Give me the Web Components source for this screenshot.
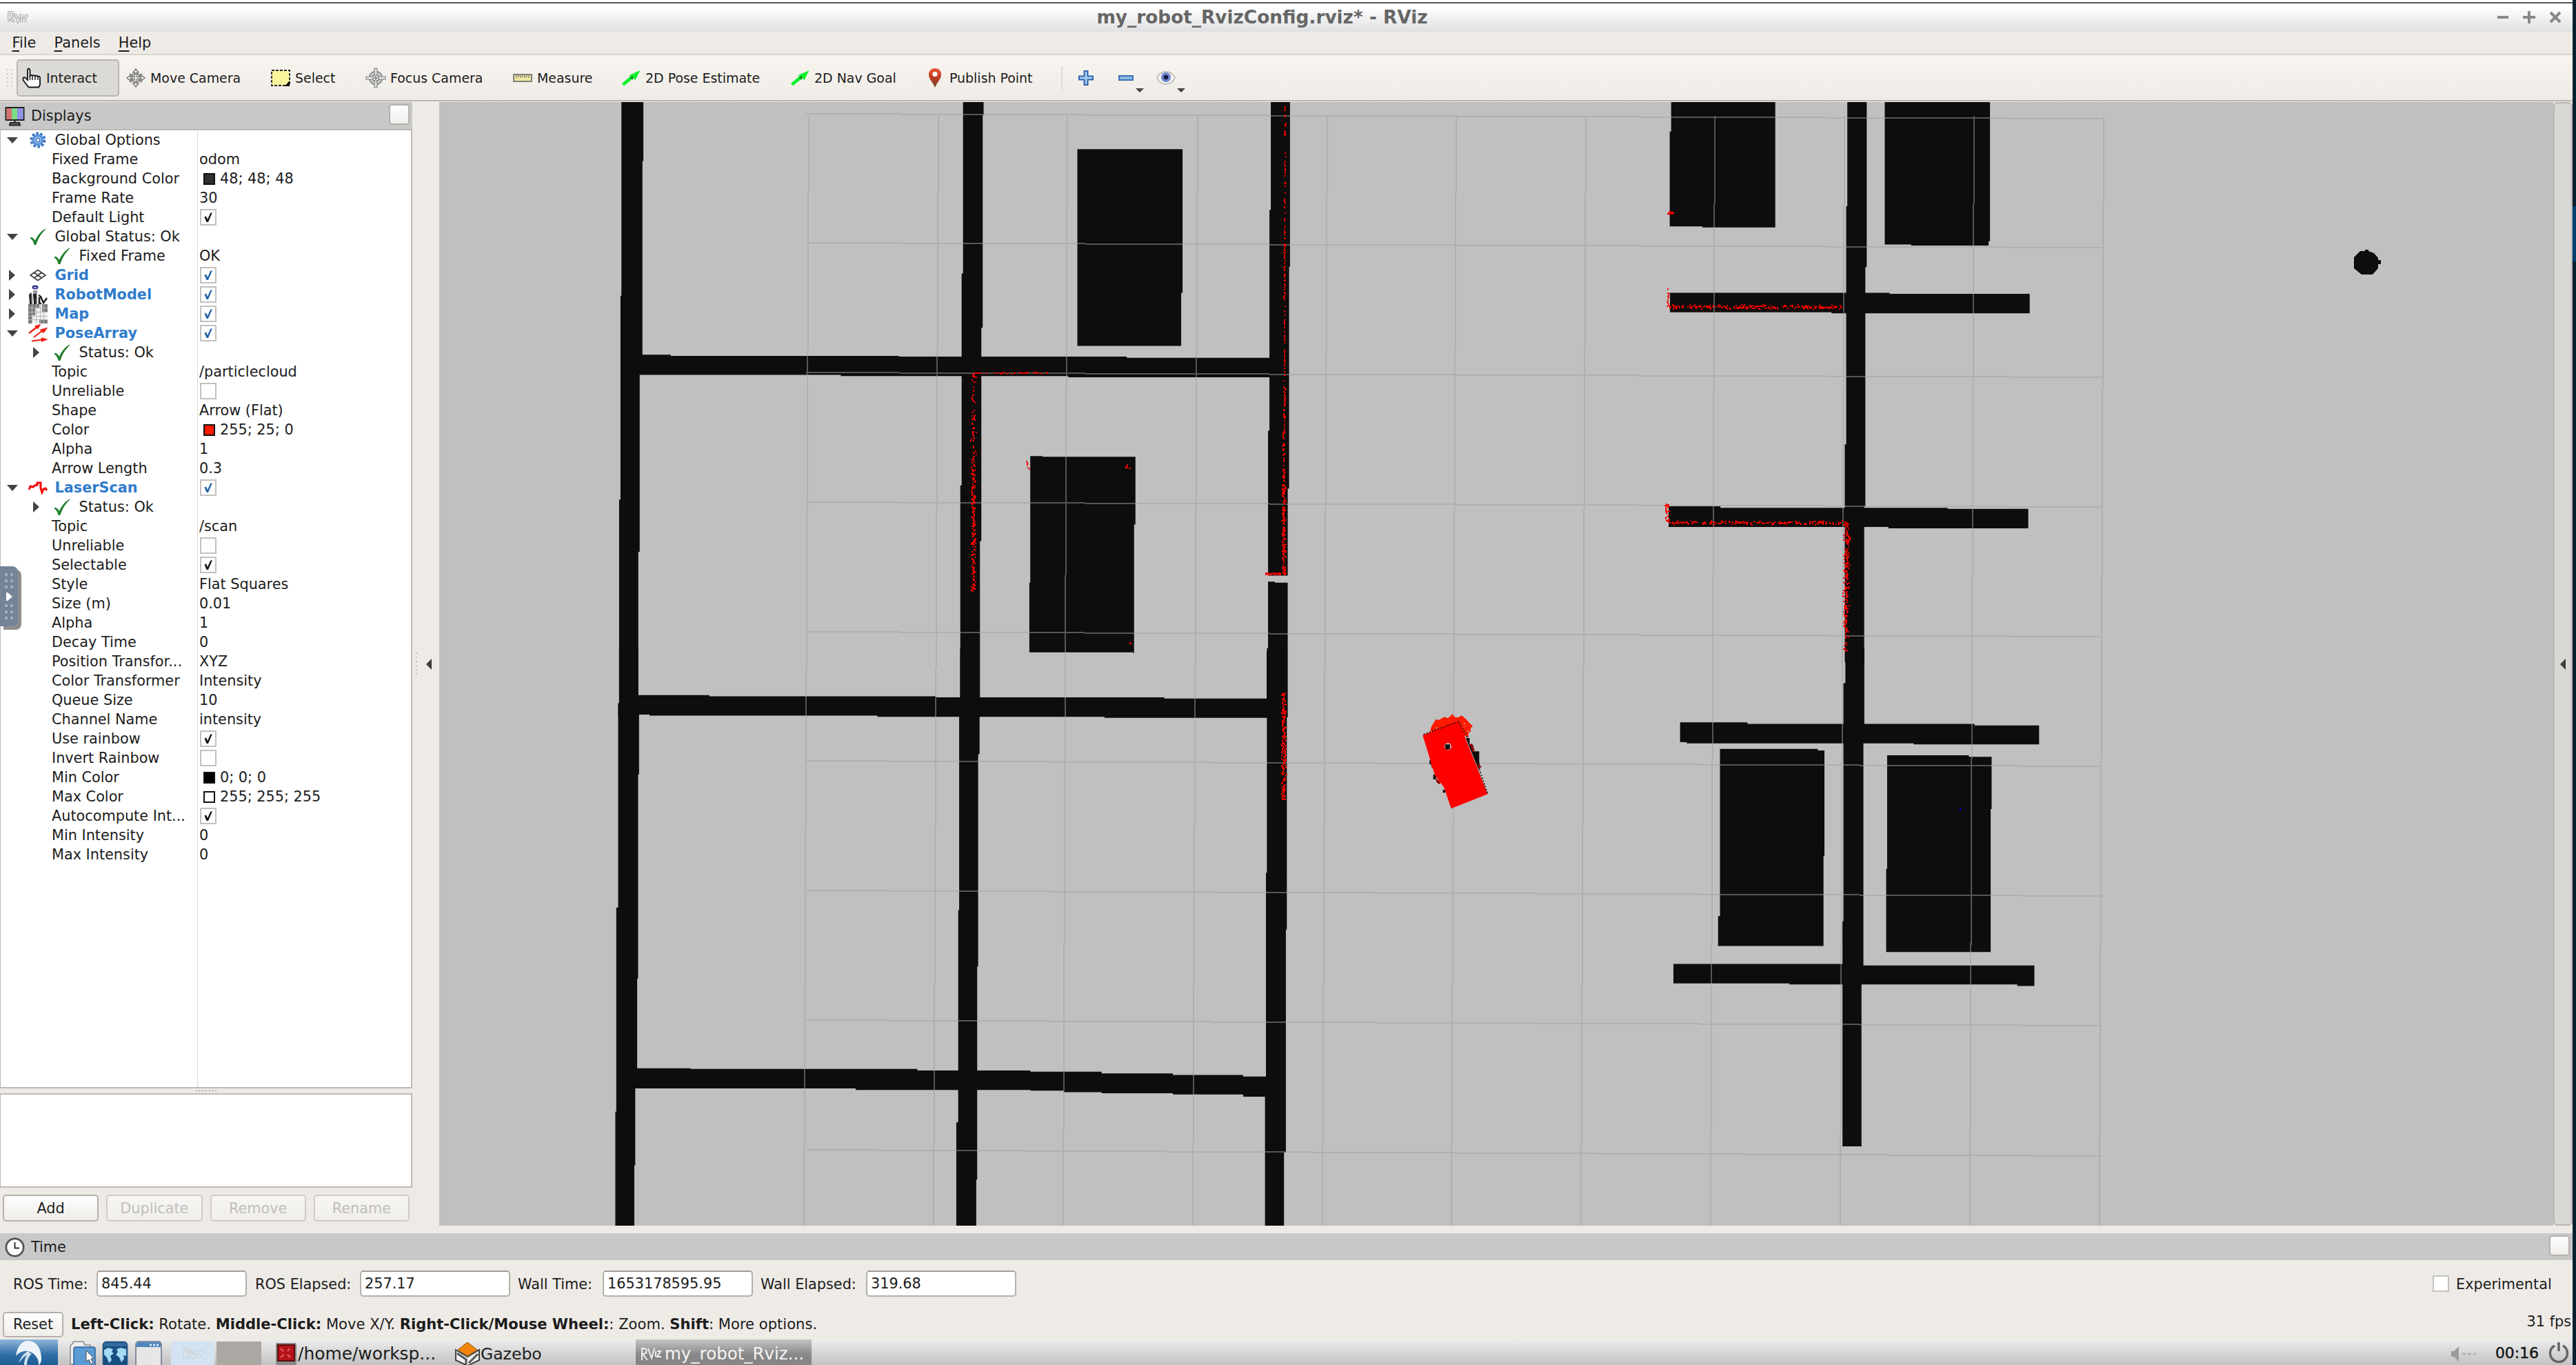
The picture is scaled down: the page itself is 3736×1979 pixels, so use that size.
<!DOCTYPE html>
<html lang="en">
<head>
<meta charset="utf-8">
<title>my_robot_RvizConfig.rviz* - RViz</title>
<style>
html,body{margin:0;padding:0;height:1979px;width:3736px;overflow:hidden;background:#07202f}
body{font-family:"DejaVu Sans",sans-serif;font-size:20.8px;color:#1c1c1c}
</style>
</head>
<body>
<rviz-window></rviz-window>
<script>
function define(name, css, html) {
  customElements.define(name, class extends HTMLElement {
    constructor() {
      super();
      this.attachShadow({ mode: 'open' });
    }
    connectedCallback() {
      if (this._done) return;
      this._done = true;
      this.shadowRoot.innerHTML = '<style>*{box-sizing:border-box}svg{display:block;flex:none}' + css + '</style>' +
        (typeof html === 'function' ? html(this) : html);
    }
  });
}

/* ---------- icons ---------- */
const CHECK = '<svg width="24" height="24" viewBox="0 0 24 24"><path d="M1 14C3.500 12.500 6 15 8 19C12 10 16 5 23 1C16 8 12 14 9 23.500H7C6 19 4 16 1 14Z" fill="#1f8a2c" stroke="#14691f" stroke-width="1"/></svg>';
const ICONS = {
  hand: '<svg width="28" height="30" viewBox="0 0 28 30"><path d="M8 18V4Q8 1.500 9.500 1.500T11.500 4V12Q13 10 15 12Q17 10.500 19 12.500Q21 11 23 13Q26 12 26 15V25L24 28.500H9.500L6 24L1.500 18V15Q4 13 6 16L8 18Z" fill="#fff" stroke="#1a1a1a" stroke-width="1.900"/><path d="M11.500 12V18M15 13V18M19 13V18M23 14V18" stroke="#1a1a1a" stroke-width="1.500"/></svg>',
  move: '<svg width="28" height="28" viewBox="0 0 28 28"><g fill="#f6f4f0" stroke="#777" stroke-width="1.400"><path d="M14 1L18 6H15.500V12.500H22V10L27 14L22 18V15.500H15.500V22H18L14 27L10 22H12.500V15.500H6V18L1 14L6 10V12.500H12.500V6H10Z"/><path d="M5 8L10 11M23 8L18 11M5 20L10 17M23 20L18 17" stroke-width="2"/><circle cx="14" cy="14" r="6.500" fill="none"/></g></svg>',
  select: '<svg width="28" height="26" viewBox="0 0 28 26"><rect x="1" y="2" width="26" height="22" fill="#faf49c" stroke="#222" stroke-width="1.800" stroke-dasharray="4 2"/><path d="M27 17V25H20Z" fill="#000"/></svg>',
  focus: '<svg width="30" height="30" viewBox="0 0 30 30"><g fill="none" stroke="#808080" stroke-width="1.700"><circle cx="15" cy="15" r="9.500" fill="#d6d6d6"/><circle cx="15" cy="15" r="5" fill="#eee"/><path d="M13 1H17V11H13ZM13 19H17V29H13ZM1 13H11V17H1ZM19 13H29V17H19Z" fill="#e4e4e4" stroke-width="1.200"/><path d="M15 12V18M12 15H18"/></g></svg>',
  measure: '<svg width="28" height="14" viewBox="0 0 28 14"><rect x="1" y="2" width="26" height="10" fill="#efe6a0" stroke="#666" stroke-width="1.600"/><path d="M5 3V7M8 3V6M11 3V7M14 3V6M17 3V7M20 3V6M23 3V7" stroke="#777" stroke-width="1.200"/></svg>',
  arrow: '<svg width="28" height="24" viewBox="0 0 28 24"><path d="M1 20L14 9L10.500 8.500L27.500 1L20.500 15L17.500 12.500L4 23.500Z" fill="#0cf22c"/><path d="M12 11L17 9L17 15Z" fill="#0a8d20"/></svg>',
  pin: '<svg width="28" height="30" viewBox="0 0 28 30"><defs><linearGradient id="p" x1="0" y1="0" x2="0" y2="1"><stop offset="0" stop-color="#ef5634"/><stop offset=".5" stop-color="#bd3a22"/><stop offset="1" stop-color="#69432c"/></linearGradient></defs><path d="M14 1C8 1 5 5 5 10C5 17 11 21 14 29C17 21 23 17 23 10C23 5 20 1 14 1Z" fill="url(#p)"/><circle cx="14" cy="9.500" r="3.600" fill="#fff"/></svg>',
  plus: '<svg width="24" height="24" viewBox="0 0 24 24"><path d="M9.500 2H14.500V9.500H22V14.500H14.500V22H9.500V14.500H2V9.500H9.500Z" fill="#a9cdf0" stroke="#2f66ab" stroke-width="2"/></svg>',
  minus: '<svg width="24" height="24" viewBox="0 0 24 24"><rect x="2" y="9" width="20" height="6" fill="#8fb8e6" stroke="#3c70b2" stroke-width="2"/></svg>',
  eye: '<svg width="28" height="22" viewBox="0 0 28 22"><path d="M1 11C6 -1 22 -1 27 11C22 23 6 23 1 11Z" fill="#f2f2ef" stroke="#b5b3b0" stroke-width="1.500"/><circle cx="14" cy="10" r="7" fill="#6c85cc"/><circle cx="14" cy="10" r="3.300" fill="#10183c"/></svg>',
  gear: '<svg width="24" height="24" viewBox="0 0 24 24"><circle cx="12" cy="12" r="9.700" fill="none" stroke="#3a74bd" stroke-width="3.600" stroke-dasharray="3.700 2.395"/><circle cx="12" cy="12" r="6.700" fill="#9cc3f0" stroke="#5b93d8" stroke-width="3.400"/><circle cx="12" cy="12" r="2.600" fill="#fff" stroke="#3a74bd" stroke-width="1.400"/></svg>',
  check: CHECK,
  grid: '<svg width="28" height="28" viewBox="0 0 28 28"><path d="M14 6.500L25 14L14 21.500L3 14ZM8.500 10L19.500 18M19.500 10L8.500 18" fill="none" stroke="#444" stroke-width="1.800" stroke-linejoin="round"/></svg>',
  robot: '<svg width="28" height="28" viewBox="0 0 28 28"><ellipse cx="10" cy="3.500" rx="4.500" ry="3" fill="#2a2a8c"/><ellipse cx="10" cy="4" rx="2.500" ry="1" fill="#c9c9e2"/><path d="M7 8H13V14H7Z" fill="#9a9a9a"/><path d="M1 14L4 11L6 16V28H2ZM7 13H12L13 28H8Z" fill="#222"/><path d="M15 15L18 17L22 26L27 19M16 18V27H19" fill="none" stroke="#222" stroke-width="2.600"/><path d="M5 12V27M12 20V28" stroke="#999" stroke-width="1.300"/></svg>',
  map: '<svg width="28" height="28" viewBox="0 0 28 28" shape-rendering="crispEdges"><rect width="28" height="28" fill="#f0f0f0"/><path d="M0 0H16V6H10V16H6V28H0ZM20 0H28V11H20ZM16 22H28V28H16Z" fill="#7c7c7c"/><path d="M5.500 0V28M11.500 0V28M17.500 0V28M22.500 0V28M0 5.500H28M0 11.500H28M0 17.500H28M0 22.500H28" stroke="#b6b6b6" stroke-width="1"/></svg>',
  poses: '<svg width="28" height="26" viewBox="0 0 28 26"><g stroke="#ef1c10" stroke-width="2.200" fill="#ef1c10"><path d="M1 13L13 4M8 19L21 9M5 24.500L20 22.500"/><path d="M18 0L14 7L9 3ZM28 5L22 13L17 8ZM28 22L19 25.500V19.500Z" stroke-width=".5"/></g></svg>',
  laser: '<svg width="28" height="20" viewBox="0 0 28 20"><path d="M1 13L3 8L7 9L9 7L13 6V3L18 3L18 11L20 17L22 12L25 11L27 14" fill="none" stroke="#f50a0a" stroke-width="3"/></svg>'
};

/* ---------- small controls ---------- */
define('push-button',
  ':host{display:flex;align-items:center;justify-content:center;border:2px solid #b4b1ac;border-radius:5px;background:linear-gradient(#fefefe,#efedea);color:#1c1c1c}:host([disabled]){border-color:#cfccc7;color:#c0beba;background:linear-gradient(#f7f6f4,#f0eeea)}',
  '<slot></slot>');
define('check-box',
  ':host{display:flex;width:24px;height:24px;border:2px solid #c3c1be;background:#fff;color:#151515;align-items:center;justify-content:center}:host([blue]){color:#2466a8}svg{visibility:hidden}:host([on]) svg{visibility:visible}',
  '<svg width="20" height="20" viewBox="0 0 20 20"><path d="M4.500 9.500L7 8.500L9 13L13 4L16 3L10 17H7.500Z" fill="currentColor"/></svg>');
define('text-field',
  ':host{display:flex;align-items:center;width:218px;height:38px;padding:0 0 1px 5px;border:2px solid #b4b1ac;border-top-color:#9f9d99;border-radius:5px;background:#fff}',
  '<slot></slot>');

/* ---------- title, menu, toolbar ---------- */
define('title-bar',
  ':host{display:flex;height:46px;border-top:3px solid #fff;align-items:center;background:linear-gradient(#fff 5%,#fcfcfc 25%,#dfe0e2)}' +
  'header{flex:1;height:43px;border-top:2px solid #555;display:flex;align-items:center;padding:0 16px 2px 11px}' +
  'h1{margin:0;flex:1;text-align:center;font-size:26.350px;line-height:30px;color:#666;white-space:nowrap}.r{width:95px;display:flex;gap:18px}.l{width:30px}',
  '<header><div class="l"><svg width="30" height="18" viewBox="0 0 30 18"><path d="M2 16V2H6Q10 3 8 8L3 9L10 16M11 4L15 15L19 4M20 7V15M22 7H28L22 14H28" fill="none" stroke="#9b9b9b" stroke-width="3.400"/><path d="M2 16V2H6Q10 3 8 8L3 9L10 16M11 4L15 15L19 4M20 7V15M22 7H28L22 14H28" fill="none" stroke="#fff" stroke-width="1.300"/></svg></div><h1>my_robot_RvizConfig.rviz* - RViz</h1>' +
  '<div class="r"><svg width="20" height="20"><path d="M2 10H18" stroke="#888" stroke-width="4"/></svg><svg width="20" height="20"><path d="M1 10H19M10 1V19" stroke="#888" stroke-width="4"/></svg><svg width="20" height="20"><path d="M3 3L17 17M17 3L3 17" stroke="#888" stroke-width="4"/></svg></div></header>');
define('menu-bar',
  ':host{display:flex;height:34px;background:#eeebe7;border-bottom:2px solid #d9d6d2;align-items:center;padding-left:17.500px;gap:26.300px}u{text-underline-offset:4px;text-decoration-thickness:2px}',
  '<span><u>F</u>ile</span><span><u>P</u>anels</span><span><u>H</u>elp</span>');
define('tool-button',
  ':host{display:flex;width:var(--w);height:54px;align-items:center;padding-left:8px;gap:7px;font-size:18.950px;flex:none;white-space:nowrap}:host([active]){border:2px solid #b9b6b1;border-radius:5px;background:#dcdad6;padding-left:6px}.i{width:28px;display:flex;justify-content:center}',
  el => '<span class="i">' + ICONS[el.getAttribute('icon')] + '</span><slot></slot>');
define('tool-bar',
  ':host{display:flex;height:68px;background:linear-gradient(#f8f5f1,#efebe6 94%);align-items:center;padding:0 0 3px 8px;position:relative}' +
  ':host::after{content:"";position:absolute;left:0;right:0;bottom:1px;height:2px;background:#bab6b2}' +
  '.h{width:12px;height:30px;margin-right:4px;background:radial-gradient(circle,#cfccc7 1px,transparent 1.500px) 0 0/6px 6px}.s{width:2px;height:34px;background:#dcd8d3;margin:0 22px 0 11px}' +
  '.d{width:12px;height:6px;align-self:end;margin:0 0 11px 2px;background:#444;clip-path:polygon(0 0,100% 0,50% 100%)}',
  '<i class="h"></i><tool-button active icon="hand" style="--w:149px;margin-right:2px">Interact</tool-button><tool-button icon="move" style="--w:210px">Move Camera</tool-button><tool-button icon="select" style="--w:138px">Select</tool-button><tool-button icon="focus" style="--w:213px">Focus Camera</tool-button><tool-button icon="measure" style="--w:157px">Measure</tool-button><tool-button icon="arrow" style="--w:245px">2D Pose Estimate</tool-button><tool-button icon="arrow" style="--w:196px">2D Nav Goal</tool-button><tool-button icon="pin" style="--w:194px">Publish Point</tool-button><i class="s"></i>' +
  ICONS.plus + '<span style="width:34px"></span>' + ICONS.minus + '<i class="d"></i><span style="width:18px"></span>' + ICONS.eye + '<i class="d"></i>');

/* ---------- displays tree ---------- */
define('prop-row',
  ':host{display:flex;height:28px;align-items:center;line-height:28px;white-space:nowrap}' +
  '.n{width:284px;display:flex;align-items:center;height:28px;overflow:hidden;flex:none}.n.b{font-weight:bold;color:#2f7ccc}.t{flex:none;width:19px;display:flex;justify-content:center}.ic{width:28px;display:flex;justify-content:center;flex:none}' +
  '.v{padding-left:5px;display:flex;align-items:center}.tx{margin-left:-1px}.sw{width:17px;height:17px;border:2px solid #111;margin:0 8px 0 5px}',
  el => {
    const g = n => el.getAttribute(n), has = n => el.hasAttribute(n);
    const tri = g('open') === '1' ? '<svg width="16" height="9"><path d="M0 0H16L8 9Z" fill="#444"/></svg>'
      : g('open') === '0' ? '<svg width="9" height="16"><path d="M0 0V16L9 8Z" fill="#444"/></svg>' : '';
    const lvl = +g('lvl');
    let n = '';
    if (lvl === 0) n = '<span class="t" style="margin-left:7px">' + tri + '</span><span class="ic" style="margin:0 10.500px 0 14px">' + ICONS[g('icon')] + '</span>';
    if (lvl === 1) n = '<span style="width:74px;flex:none"></span>';
    if (lvl === 2) n = '<span class="t" style="margin-left:42px">' + tri + '</span><span class="ic" style="margin:0 10.500px 0 14px">' + CHECK + '</span>';
    let v = '';
    if (has('chk')) v = '<check-box ' + (g('chk') !== '0' ? 'on ' : '') + (g('chk') === 'b' ? 'blue' : '') + '></check-box>';
    if (has('sw')) v += '<span class="sw" style="background:' + g('sw') + '"></span>';
    if (has('val')) v += '<span class="tx">' + g('val') + '</span>';
    return '<div class="n ' + (has('bold') ? 'b' : '') + '">' + n + '<span>' + g('name') + '</span></div><div class="v">' + v + '</div>';
  });
const ROWS = [
  [0, 'Global Options', { icon: 'gear', open: 1 }], [1, 'Fixed Frame', { val: 'odom' }], [1, 'Background Color', { sw: '#303030', val: '48; 48; 48' }],
  [1, 'Frame Rate', { val: '30' }], [1, 'Default Light', { chk: 1 }], [0, 'Global Status: Ok', { icon: 'check', open: 1 }], [2, 'Fixed Frame', { val: 'OK' }],
  [0, 'Grid', { icon: 'grid', open: 0, bold: 1, chk: 'b' }], [0, 'RobotModel', { icon: 'robot', open: 0, bold: 1, chk: 'b' }], [0, 'Map', { icon: 'map', open: 0, bold: 1, chk: 'b' }],
  [0, 'PoseArray', { icon: 'poses', open: 1, bold: 1, chk: 'b' }], [2, 'Status: Ok', { open: 0 }], [1, 'Topic', { val: '/particlecloud' }], [1, 'Unreliable', { chk: 0 }],
  [1, 'Shape', { val: 'Arrow (Flat)' }], [1, 'Color', { sw: '#ff1900', val: '255; 25; 0' }], [1, 'Alpha', { val: '1' }], [1, 'Arrow Length', { val: '0.3' }],
  [0, 'LaserScan', { icon: 'laser', open: 1, bold: 1, chk: 'b' }], [2, 'Status: Ok', { open: 0 }], [1, 'Topic', { val: '/scan' }], [1, 'Unreliable', { chk: 0 }], [1, 'Selectable', { chk: 1 }],
  [1, 'Style', { val: 'Flat Squares' }], [1, 'Size (m)', { val: '0.01' }], [1, 'Alpha', { val: '1' }], [1, 'Decay Time', { val: '0' }], [1, 'Position Transfor...', { val: 'XYZ' }],
  [1, 'Color Transformer', { val: 'Intensity' }], [1, 'Queue Size', { val: '10' }], [1, 'Channel Name', { val: 'intensity' }], [1, 'Use rainbow', { chk: 1 }], [1, 'Invert Rainbow', { chk: 0 }],
  [1, 'Min Color', { sw: '#000', val: '0; 0; 0' }], [1, 'Max Color', { sw: '#fff', val: '255; 255; 255' }], [1, 'Autocompute Int...', { chk: 1 }], [1, 'Min Intensity', { val: '0' }], [1, 'Max Intensity', { val: '0' }]
];
define('dock-title',
  ':host{display:flex;align-items:center;height:39px;background:#c8c8c8;padding:0 4px 0 7px;gap:9px}push-button{width:30px;height:30px;margin-left:auto;margin-bottom:3px}svg{margin-top:2px}',
  el => (el.getAttribute('icon') === 'screen'
    ? '<svg width="29" height="29" viewBox="0 0 29 29"><rect x="1.500" y="2" width="26" height="18" fill="#7ddb86" stroke="#222" stroke-width="2"/><path d="M2.500 3H10V19H2.500Z" fill="#d77070"/><path d="M18 3H26.500V19H18Z" fill="#9493ea"/><path d="M14.500 20V25M8 24H21L22 27.500H7Z" stroke="#222" stroke-width="2" fill="#777"/></svg>'
    : '<svg width="29" height="29" viewBox="0 0 29 29"><circle cx="14.500" cy="14.500" r="12.600" fill="#fff" stroke="#555" stroke-width="2.800"/><path d="M14.500 7V15.500H21" fill="none" stroke="#333" stroke-width="2"/></svg>') +
    '<slot></slot><push-button></push-button>');
define('displays-panel',
  ':host{display:flex;flex-direction:column;width:598px;height:1629px;flex:none}' +
  '.tree{height:1391px;border:2px solid #bdb9b5;border-left-width:1px;background:linear-gradient(#dcdad7,#dcdad7) 285px 0/1px 100% no-repeat #fff}' +
  '.dots{height:7px;background:radial-gradient(circle,#b5b2ad 1px,transparent 1.500px) 50% 50%/5px 5px repeat-x;width:30px;align-self:center}' +
  '.desc{height:137px;border:2px solid #bdb9b5;border-left-width:1px;background:#fff}.btns{display:flex;gap:11px;padding:10px 4px 0}.btns push-button{width:139.500px;height:39px}',
  el => '<dock-title icon="screen">Displays</dock-title><div class="tree">' +
    ROWS.map(([l, n, a]) => '<prop-row lvl="' + l + '" name="' + n + '"' + Object.entries(a).map(([k, v]) => ' ' + k + '="' + v + '"').join('') + '></prop-row>').join('') +
    '</div><div class="dots"></div><div class="desc"></div><div class="btns"><push-button>Add</push-button><push-button disabled>Duplicate</push-button><push-button disabled>Remove</push-button><push-button disabled>Rename</push-button></div>');
define('dock-splitter',
  ':host{display:flex;width:39px;align-items:center;gap:13px;padding:0 0 0 5px}.d{width:2px;height:34px;background:repeating-linear-gradient(#c4c1bc 0 2px,transparent 2px 6px)}',
  '<i class="d"></i><svg width="8" height="16"><path d="M8 0V16L0 8Z" fill="#3c3c3c"/></svg>');

/* ---------- 3D view ---------- */
function rng(seed) { return () => (seed = (seed * 16807) % 2147483647) / 2147483647; }
function scanPath() {
  const r = rng(4217);
  let d = '';
  const dot = (x, y) => { d += 'M' + Math.round(x) + ' ' + Math.round(y) + 'h2v2h-2z'; };
  const v = (x0, x1, y0, y1, n, j) => { for (let i = 0; i < n; i++) { const t = r(); dot(x0 + (x1 - x0) * t + (r() + r() - 1) * j, y0 + (y1 - y0) * t); } };
  const h = (x0, x1, y, n, j) => { for (let i = 0; i < n; i++) dot(x0 + (x1 - x0) * r(), y + (r() + r() - 1) * j); };
  v(1863, 1862, 150, 400, 60, 1.2); v(1862, 1862, 350, 620, 100, 1.2); v(1861, 1861, 600, 720, 60, 2); v(1861, 1861, 700, 830, 150, 3.2);
  v(1861, 1861, 1004, 1158, 210, 4); v(1411, 1411, 541, 690, 80, 4.5); v(1411, 1411, 690, 857, 180, 4);
  h(1411, 1522, 540, 42, 1.5); h(1834, 1864, 831, 60, 1.5);
  v(1488, 1491, 668, 679, 7, 1); h(1631, 1638, 676, 8, 4); h(1636, 1640, 931, 3, 1.5); h(2418, 2427, 308, 10, 3);
  v(2419, 2418, 418, 445, 18, 1.5); h(2418, 2672, 444, 220, 3.5); v(2417, 2417, 728, 756, 34, 4); h(2420, 2678, 757, 190, 3);
  v(2678, 2676, 757, 900, 170, 5); v(2676, 2676, 900, 947, 30, 5);
  return d;
}
function gridPath() {
  let d = '';
  [[1173, 1166], [1361, 1354], [1548, 1542], [1737, 1730], [1925, 1918], [2112, 2105], [2300, 2293], [2487, 2481], [2675, 2669], [2863, 2857], [3051, 3045]]
    .forEach(([a, b]) => { d += 'M' + a + ' 168L' + b + ' 1777'; });
  [[165, 172], [352, 359], [540, 547], [728, 735], [916, 923], [1103, 1111], [1291, 1299], [1479, 1487], [1667, 1676]]
    .forEach(([a, b]) => { d += 'M1169 ' + a + 'L3049 ' + b; });
  return d;
}
const poly = list => list.map(p => '<polygon points="' + p + '"/>').join('');
define('map-view',
  ':host{display:block;width:3066px;height:1629px;background:#c0c0c0;overflow:hidden}',
  el => '<svg width="3066" height="1629" viewBox="637 148 3066 1629"><g fill="#0d0d0d">' +
  '<g transform="translate(880 140) scale(.66327 .57398)">' + poly([
    '32,14 80,14 80,163 78,163 78,660 72,700 72,1150 69,1150 69,1568 25,1568 25,1532 27,1532 27,1018 30,1018 30,503 32,503',
    '779,14 824,14 824,47 822,47 822,584 819,584 819,1123 816,1123 816,1568 773,1568 773,982 776,982 776,447 779,447',
    '1452,14 1494,14 1494,430 1492,430 1492,990 1489,990 1489,1210 1446,1210 1446,844 1449,844 1449,286 1452,286',
    '1446,1225 1461,1225 1461,1228 1489,1228 1489,1568 1443,1568 1443,1402 1446,1402',
    '60,652 140,652 140,655 639,655 639,657 1137,657 1137,660 1470,660 1470,709 1009,709 1009,706 512,706 512,703 60,703',
    '1029,133 1259,133 1259,496 1256,496 1256,630 1029,630',
    '926,908 953,908 953,910 1156,910 1156,1081 1153,1081 1153,1407 1150,1404 924,1404 924,1228 926,1228']) + '</g>' +
  '<g transform="translate(2380 140) scale(.40816 .52296)">' + poly([
    '733,14 802,14 802,473 797,473 797,1137 793,1137 793,1568 724,1568 724,964 729,964 729,304 733,304',
    '107,14 477,14 477,363 218,363 218,360 102,360 102,97 107,97',
    '866,14 1240,14 1240,401 1235,401 1235,413 960,413 960,410 866,410',
    '103,544 883,544 883,547 1381,547 1381,601 677,601 677,598 103,598',
    '98,1136 282,1136 282,1140 1089,1140 1089,1143 1376,1143 1376,1197 879,1197 879,1193 98,1193']) + '</g>' +
  '<g transform="translate(880 940) scale(1.37755 .54209)">' + poly([
    '13,0 33,0 33,125 34,177 34,337 33,337 33,883 32,883 32,1130 30,1176 30,1383 29,1383 29,1550 9,1550 9,1239 10,1239 10,693 12,693 12,148 13,148',
    '372,0 392.500,0 392.500,283 391,283 391,851 390,851 390,1421 389,1421 389,1550 368,1550 368,1268 370,1268 370,700 371,700 371,183 372,183',
    '695,0 716,0 716,752 715,752 715,1348 713,1348 713,1550 693,1550 693,1150 694,1150 694,600 695,600',
    '25,125 108,125 108,128 347,128 347,131 587,131 587,134 705,134 705,186 524,186 524,183 285,183 285,180 45,180 45,177 25,177',
    '25,1123 88,1123 88,1125 327,1125 327,1129 446,1129 446,1132 521,1132 521,1137 596,1137 596,1141 670,1141 670,1145 705,1145 705,1199 670,1199 670,1193 596,1193 596,1190 521,1190 521,1187 481,1187 481,1183 446,1183 446,1181 262,1181 262,1177 25,1177',
    '1304,0 1324,0 1324,200 1323,255 1323,850 1321,900 1321,1332 1301,1332 1301,730 1302,730 1302,93 1304,93',
    '1130,198 1201,198 1201,202 1440,202 1440,206 1508,206 1508,257 1376,257 1376,254 1137,254 1137,251 1130,251',
    '1172,269 1275,269 1275,273 1282,273 1282,555 1281,555 1281,796 1170,796 1170,716 1172,716',
    '1348,286 1434,286 1434,290 1458,290 1458,430 1457,430 1457,812 1347,812 1347,590 1348,590',
    '1123,844 1301,844 1301,848 1503,848 1503,903 1485,903 1485,899 1245,899 1245,896 1123,896']) + '</g>' +
  '<path d="M3423 364H3430V362H3435V364L3443 367L3449 374V377H3453V383H3449V389L3441 398H3425L3414 389V373Z"/></g>' +
  '<path d="' + gridPath() + '" fill="none" stroke="#a0a0a0" stroke-opacity=".5" stroke-width="2" shape-rendering="crispEdges"/>' +
  '<path d="' + scanPath() + '" fill="#f50000" shape-rendering="crispEdges"/><rect x="2842" y="1171" width="2" height="4" fill="#0000c8"/>' +
  '<g transform="translate(1980 980) scale(.33333)"><path d="M283 240L288 220L308 188L320 192L345 178L360 184L378 166L392 180L405 180L420 172L440 190L455 206L468 218L458 228L460 240L448 250L450 268L440 262Z" fill="#ff1a00"/>' +
  '<g fill="#c0c0c0"><circle cx="310" cy="226" r="3"/><circle cx="374" cy="175" r="2"/><circle cx="431" cy="207" r="3"/><circle cx="431" cy="220" r="2"/><circle cx="448" cy="240" r="3"/></g>' +
  '<path d="M438 270H454V300H470V328H496V372L500 400L492 405ZM296 430H308V450H296ZM280 366H292V384H280ZM338 495H348V508H338Z" fill="#0d0d0d"/>' +
  '<path d="M454 298L464 294L476 322L470 334ZM484 378L506 394L496 406ZM282 370H292L300 402L290 400ZM306 444L328 462L322 472L310 462Z" fill="#8e0000"/>' +
  '<polygon points="250,258 406,196 533,514 374,577 342,484 318,452 302,430 285,372" fill="#f00"/>' +
  '<path d="M254 254L406 198L444 268M496 405L533 514" fill="none" stroke="#0d0d0d" stroke-width="5" stroke-dasharray="6 7"/>' +
  '<circle cx="360" cy="307" r="15" fill="#c0c0c0"/><path d="M348 298H369V317L356 321L348 316Z" fill="#0d0d0d"/></g></svg>');
define('side-grip',
  ':host{display:flex;width:28px;align-items:center;justify-content:center;background:#dad8d4;border:2px solid #bab6b2;border-radius:6px}',
  '<svg width="8" height="16"><path d="M8 0V16L0 8Z" fill="#3c3c3c"/></svg>');

/* ---------- time panel and status ---------- */
define('time-panel',
  ':host{display:flex;flex-direction:column;height:165px;padding-top:11px}.f{display:flex;align-items:center;height:38px;margin-top:15px;padding-left:19px;white-space:nowrap}.f>span{flex:none;padding-top:1px}' +
  'text-field{margin-right:12px;flex:none}check-box{margin:0 10px 0 auto}.s{display:flex;align-items:center;margin-top:21px;padding:0 2px 0 4px;height:38px;gap:11px;white-space:nowrap}.s push-button{width:88px;height:37px}.s p{margin:0;flex:1;padding-bottom:1px;font-size:21.080px}',
  '<dock-title icon="clock">Time</dock-title><div class="f"><span style="width:121px">ROS Time:</span><text-field>845.44</text-field><span style="width:152px">ROS Elapsed:</span><text-field style="margin-right:11px">257.17</text-field><span style="width:123px">Wall Time:</span><text-field style="margin-right:11px">1653178595.95</text-field><span style="width:153px">Wall Elapsed:</span><text-field>319.68</text-field><check-box></check-box><span style="width:169px">Experimental</span></div>' +
  '<div class="s"><push-button>Reset</push-button><p><b>Left-Click:</b> Rotate. <b>Middle-Click:</b> Move X/Y. <b>Right-Click/Mouse Wheel:</b>: Zoom. <b>Shift</b>: More options.</p><span style="padding-bottom:8px">31 fps</span></div>');

/* ---------- desktop task bar ---------- */
define('task-item',
  ':host{display:flex;align-items:center;height:37px;width:var(--w);gap:4px;flex:none;font-size:24.500px;white-space:nowrap;padding-top:4px}:host([active]){background:linear-gradient(#c4c4c4,#888 60%,#858585);color:#f4f4f4;padding-left:7px}',
  '<slot name="icon"></slot><slot></slot>');
define('task-bar',
  ':host{display:flex;height:37px;background:linear-gradient(#ececec,#c2c2c2);align-items:center}.m{width:84px;height:37px;background:linear-gradient(#8fb6da,#2f6ca4 60%,#1d5c95);display:flex;justify-content:center}' +
  '.p{width:63px;height:34px;background:#d3e3f1;margin:3px 3px 0 12px;display:flex;align-items:center;justify-content:center}.q{width:65px;height:34px;background:#aba8a4;margin:3px 21px 0 0}b{font-weight:normal;font-size:21.900px;color:#111;margin:2px 14px 0 27px;-webkit-text-stroke:.4px #111}',
  '<div class="m"><svg width="40" height="37" viewBox="0 0 40 37"><path d="M1 24C3 9 10 2 19 2C31 2 38 13 38 28C38 33 36 36 34 37C35 28 28 19 19 17C12 16 6 18 1 24Z" fill="#eef4f9"/><path d="M19 17C11 21 7 28 5 35C9 28 14 23 22 20Z" fill="#dbe8f3"/><path d="M20 19C15 24 13 31 13 37L17 37C17 31 19 25 24 21Z" fill="#cfe0ee"/></svg></div>' +
  '<svg width="38" height="35" style="margin:2px 0 0 17px"><path d="M1 8L6 1H20L22 6H30V34H1Z" fill="#eee" stroke="#8a8a8a" stroke-width="1.500"/><rect x="6" y="9" width="31" height="28" rx="3" fill="#5a9bd4" stroke="#2c6095" stroke-width="1.500"/><path d="M24 14V30L28 27L31 34L34 32L31 26L35 25Z" fill="#fff" stroke="#444"/></svg>' +
  '<svg width="38" height="35" style="margin:2px 0 0 9px"><rect x="1" y="1" width="36" height="37" rx="5" fill="#174e80" stroke="#446b8c"/><rect x="3" y="3" width="32" height="5" fill="#356c9e"/><path d="M3 13L9 10L16 12L14 16L17 18L12 22L14 28L10 32L7 24L3 20ZM21 12L27 10L35 12V22L31 21L32 26L28 31L25 24L20 20L23 16Z" fill="#a5daf4"/></svg>' +
  '<svg width="40" height="35" style="margin:2px 0 0 10px"><rect x="1" y="1" width="37" height="36" rx="4" fill="#e6e6e6" stroke="#65748a" stroke-width="1.500"/><path d="M2 9V5Q2 2 5 2H34Q37 2 37 5V9Z" fill="#4b85bd"/><path d="M21 6H24M26 6H29M31 6H34" stroke="#dce9f5" stroke-width="3"/></svg>' +
  '<div class="p"><svg width="28" height="17" viewBox="0 0 30 18"><path d="M2 16V2H6Q10 3 8 8L3 9L10 16M11 4L15 15L19 4M20 7V15M22 7H28L22 14H28" fill="none" stroke="#b9c3cb" stroke-width="3"/><path d="M2 16V2H6Q10 3 8 8L3 9L10 16M11 4L15 15L19 4M20 7V15M22 7H28L22 14H28" fill="none" stroke="#f4f8fb" stroke-width="1.200"/></svg></div><div class="q"></div>' +
  '<task-item style="--w:260px;font-size:24.900px"><svg slot="icon" width="30" height="32" style="margin-right:-2px"><rect x="0" y="0" width="30" height="32" rx="2" fill="#888"/><rect x="3" y="3" width="24" height="23" fill="#b51318" stroke="#5b0c0e" stroke-width="2"/><path d="M7 8L11 12M20 8L17 12M7 21L12 17M21 21L17 17" stroke="#e4666a" stroke-width="2"/></svg>/home/worksp...</task-item>' +
  '<task-item style="--w:262px"><svg slot="icon" width="36" height="34" viewBox="0 0 36 34"><path d="M1 11L18 21L35 11V26L18 34L1 26Z" fill="#eee" stroke="#444" stroke-width="2"/><path d="M18 0L32 11L18 20L4 11Z" fill="#f3850c" stroke="#8b5418"/><path d="M3 16L16 25V32M20 30L33 17" fill="none" stroke="#555" stroke-width="3"/></svg><span style="font-size:23.500px;margin-left:-3px">Gazebo</span></task-item>' +
  '<task-item active style="--w:255px"><svg slot="icon" width="31" height="22" viewBox="0 0 31 22"><path d="M2 20V3H6Q10 4 8 10L3 11L10 20M11 3L16 17L20 3M22 7V15M24 7H29L24 15H30" fill="none" stroke="#f0f0f0" stroke-width="2"/></svg>my_robot_Rviz...</task-item>' +
  '<svg width="38" height="24" style="margin-left:auto;margin-top:4px"><path d="M1 8H5L12 1V23L5 16H1Z" fill="#9b9b9b"/><path d="M17 12H37" stroke="#b2b2b2" stroke-width="3" stroke-dasharray="5 3"/></svg><b>00:16</b>' +
  '<svg width="30" height="31" viewBox="0 0 30 31" style="margin-right:5px"><path d="M9 6A12.500 12.500 0 1 0 21 6M15 1V14" fill="none" stroke="#636363" stroke-width="3.400"/></svg>');

define('edge-handle',
  ':host{position:absolute;left:0;top:821px;width:26px;height:87px;border-radius:0 8px 8px 0;background:#76849a;box-shadow:5px 5px 0 #8e8e8e}',
  el => '<svg width="26" height="87"><g fill="#a3adbb">' + [10, 19, 28, 55, 64, 73].map(y => '<rect x="7" y="' + y + '" width="4" height="4"/><rect x="15" y="' + y + '" width="4" height="4"/>').join('') + '</g><path d="M9 38H11L18 44L11 50H9Z" fill="#fff"/></svg>');

define('rviz-window',
  ':host{display:flex;flex-direction:column;width:3731px;height:1979px;background:#eeebe6;position:relative}.mid{display:flex;height:1629px}.blue{position:absolute;left:3731px;top:299px;width:5px;height:80px;background:#00406f}',
  '<title-bar></title-bar><menu-bar></menu-bar><tool-bar></tool-bar><div class="mid"><displays-panel></displays-panel><dock-splitter></dock-splitter><map-view></map-view><side-grip></side-grip></div><time-panel></time-panel><task-bar></task-bar><edge-handle></edge-handle><i class="blue"></i>');
</script>
</body>
</html>
